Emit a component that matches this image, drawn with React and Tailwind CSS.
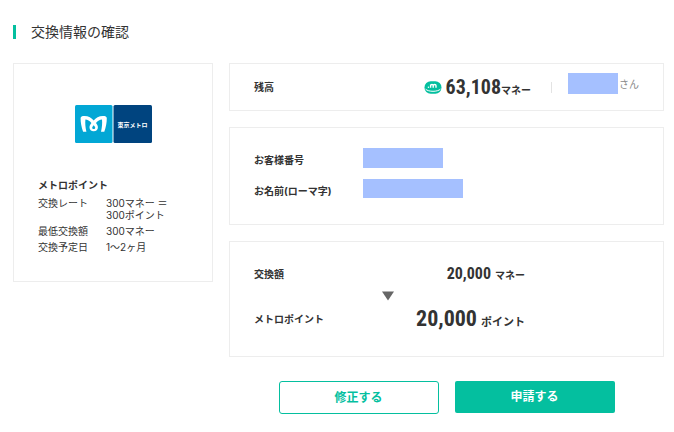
const digits = "font-['Roboto_Condensed','Roboto',sans-serif]";

function SectionTitle({ children }) {
  return (
    <h1 className="flex items-center gap-[15px] text-[14px] leading-5">
      <span className="h-[14px] w-[3px] bg-[#04bf9f]" />
      {children}
    </h1>
  );
}

function MetroLogo() {
  return (
    <svg role="img" aria-label="東京メトロ" viewBox="0 0 77 38" className="mx-auto block h-[38px] w-[77px]">
      <rect width="37.5" height="38" rx="1.5" fill="#02a7d5" />
      <rect x="38.5" width="38.5" height="38" rx="1.5" fill="#00447f" />
      <path
        fillRule="evenodd"
        fill="#fff"
        d="M5.6 13.2C5.6 11.6 7 11 9.5 11C13.6 11 16.6 13 18.7 15.6C20.8 13 23.8 11 27.9 11C30.4 11 31.8 11.6 31.8 13.2C31.8 17.5 31 22 29.3 26.8H26C27 22.5 27.4 18.5 27 14.6C25 14.8 22.6 16 21 18C22.3 19.7 22.9 21 22.9 22.4C22.9 24.7 21.2 26.2 18.7 26.2C16.2 26.2 14.5 24.7 14.5 22.4C14.5 21 15.1 19.7 16.4 18C14.8 16 12.4 14.8 10.4 14.6C10 18.5 10.4 22.5 11.4 26.8H8.1C6.4 22 5.6 17.5 5.6 13.2ZM18.7 20.2C17.7 21.3 17.2 22 17.2 22.7C17.2 23.5 17.8 24 18.7 24C19.6 24 20.2 23.5 20.2 22.7C20.2 22 19.7 21.3 18.7 20.2Z"
      />
      <text
        x="57.6"
        y="21.6"
        textAnchor="middle"
        fill="#fff"
        fontSize="6"
        fontWeight="700"
        className="font-['Noto_Sans_CJK_JP',sans-serif]"
      >
        東京メトロ
      </text>
    </svg>
  );
}

function MoneyIcon() {
  return (
    <svg aria-hidden="true" viewBox="0 0 18 13" className="h-[13px] w-[18px]">
      <rect x="0.5" y="0.3" width="17" height="12.4" rx="6.2" fill="#04bf9f" />
      <path d="M1.6 8.2C4.5 11 13.5 11 16.4 8.2" fill="none" stroke="#fff" strokeWidth="1" />
      <path
        d="M6.6 6.8V3.4M6.6 4.6C6.8 3.1 9.2 3.1 9.2 4.6V6.8M9.2 4.6C9.4 3.1 12 3.1 12 4.6V6.8"
        fill="none"
        stroke="#fff"
        strokeWidth="1.4"
      />
      <rect x="3.8" y="5.6" width="1.3" height="1.3" fill="#fff" />
    </svg>
  );
}

function Card({ className, children }) {
  return <section className={`border border-[#ededed] ${className}`}>{children}</section>;
}

export default function App() {
  return (
    <main className="bg-white pt-[22px] pr-[10px] pb-[18px] pl-[13px] font-['Inter','Noto_Sans_CJK_JP',sans-serif] text-[10px] text-[#333]">
      <SectionTitle>交換情報の確認</SectionTitle>

      <div className="mt-[21px] flex items-start gap-4">
        <Card className="w-[200px] shrink-0 px-6 pt-[41px] pb-7">
          <MetroLogo />
          <h2 className="mt-[34px] font-bold leading-4">メトロポイント</h2>
          <dl className="mt-1 grid grid-cols-[68px_1fr] gap-y-1 leading-3">
            <dt>交換レート</dt>
            <dd>
              300マネー ＝<br />
              300ポイント
            </dd>
            <dt>最低交換額</dt>
            <dd>300マネー</dd>
            <dt>交換予定日</dt>
            <dd>1〜2ヶ月</dd>
          </dl>
        </Card>

        <div className="min-w-0 flex-1">
          <Card className="flex h-12 items-center px-6 font-bold">
            <h2 className="flex-1">残高</h2>
            <MoneyIcon />
            <p className="ml-1 flex items-baseline">
              <span className={`${digits} text-[20px] leading-6`}>63,108</span>
              マネー
            </p>
            <span className="ml-5 h-[11px] w-px bg-[#e3e3e3]" />
            <p className="mb-[7px] ml-4 flex items-center gap-px font-normal text-[#888]">
              <span className="h-[21px] w-[50px] bg-[#a5c0ff]" />
              <span className="pt-[2px]">さん</span>
            </p>
          </Card>

          <Card className="mt-4 px-6 pt-5 pb-[23px]">
            <dl className="grid grid-cols-[109px_1fr] gap-y-[9px] leading-5">
              <dt className="pt-[2px] font-bold">お客様番号</dt>
              <dd>
                <span className="block h-5 w-[80px] bg-[#a5c0ff]" />
              </dd>
              <dt className="pt-[2px] font-bold">お名前(ローマ字)</dt>
              <dd>
                <span className="block h-[19px] w-[100px] bg-[#a5c0ff]" />
              </dd>
            </dl>
          </Card>

          <Card className="mt-4 px-6 pt-5 pb-[21px] font-bold">
            <div className="flex items-center">
              <h2 className="flex-1">交換額</h2>
              <p className="mr-[114px] flex items-baseline gap-1">
                <span className={`${digits} text-[16px] leading-6`}>20,000</span>
                マネー
              </p>
            </div>
            <svg aria-hidden="true" viewBox="0 0 12 10" className="mt-[5px] ml-[128px] block h-[10px] w-3">
              <path d="M0 0.5H12L6 9.5Z" fill="#666" />
            </svg>
            <div className="mt-[2px] flex items-center">
              <h2 className="flex-1">メトロポイント</h2>
              <p className="mr-[114px] flex items-baseline gap-1 text-[11px]">
                <span className={`${digits} text-[22px] leading-8`}>20,000</span>
                ポイント
              </p>
            </div>
          </Card>

          <div className="mt-6 flex justify-center gap-4">
            <button type="button" className="h-[33px] w-[160px] rounded-[3px] border border-[#04bf9f] text-[12px] font-bold text-[#04bf9f]">
              修正する
            </button>
            <button type="button" className="h-8 w-[160px] rounded-[2px] bg-[#04bf9f] text-[12px] font-bold text-white">
              申請する
            </button>
          </div>
        </div>
      </div>
    </main>
  );
}
